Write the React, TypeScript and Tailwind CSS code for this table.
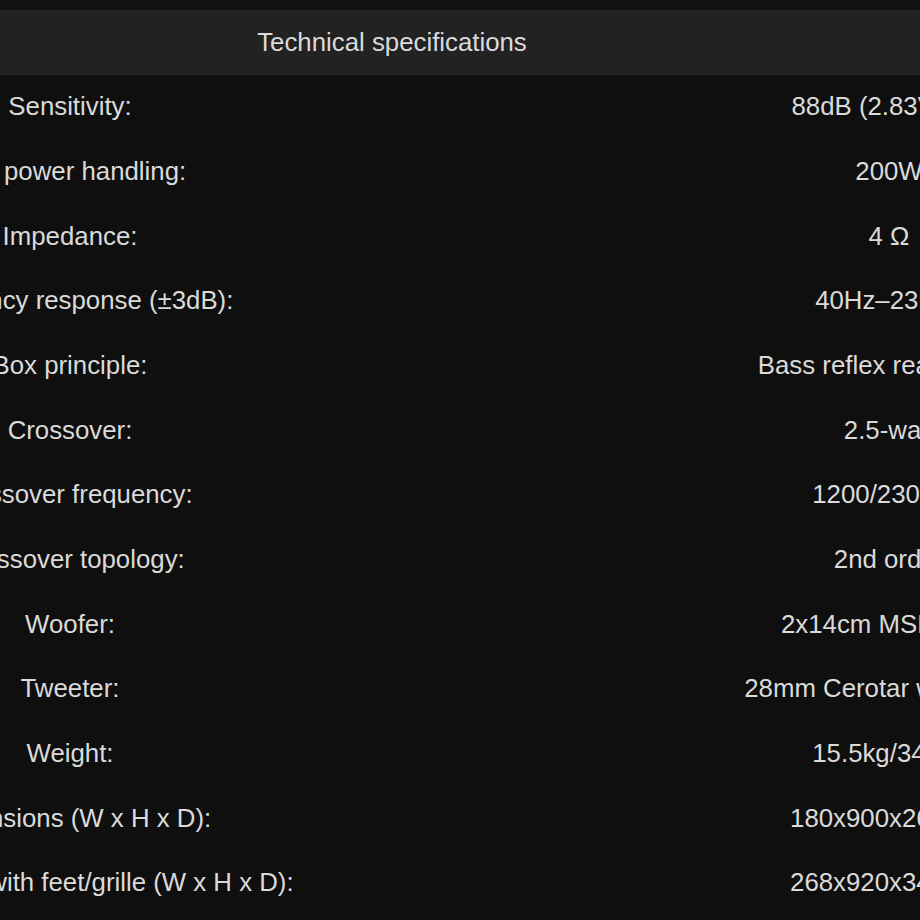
import React from "react";

const specs: [string, string][] = [
  ["Sensitivity:", "88dB (2.83V/1m)"],
  ["IEC power handling:", "200W"],
  ["Impedance:", "4 Ω"],
  ["Frequency response (±3dB):", "40Hz–23kHz"],
  ["Box principle:", "Bass reflex rear-ported"],
  ["Crossover:", "2.5-way"],
  ["Crossover frequency:", "1200/2300Hz"],
  ["Crossover topology:", "2nd order"],
  ["Woofer:", "2x14cm MSP cone"],
  ["Tweeter:", "28mm Cerotar with Hexis"],
  ["Weight:", "15.5kg/34 lbs"],
  ["Dimensions (W x H x D):", "180x900x260mm"],
  ["Dimensions with feet/grille (W x H x D):", "268x920x340mm"],
];

const SpecRow = ({ label, value }: { label: string; value: string }) => {
  return (
    <>
      <div className="h-[64.67px] flex items-center justify-center whitespace-nowrap">
        {label}
      </div>
      <div className="h-[64.67px] flex items-center justify-center whitespace-nowrap">
        {value}
      </div>
    </>
  );
};

export default function App() {
  return (
    <div
      className="w-[920px] h-[920px] overflow-hidden bg-[#0f0f0f] text-[#dadada] text-[25.8px]"
      style={{ fontFamily: '"Liberation Sans", Arial, sans-serif' }}
    >
      <div className="h-[9.5px] bg-[#121212]" />
      <div className="ml-[-427px] w-[1638px]">
        <div className="h-[65px] bg-[#222222] flex items-center justify-center">
          Technical specifications
        </div>
        <div className="grid grid-cols-[994px_644px]">
          {specs.map(([label, value]) => (
            <SpecRow key={label} label={label} value={value} />
          ))}
        </div>
      </div>
    </div>
  );
}
